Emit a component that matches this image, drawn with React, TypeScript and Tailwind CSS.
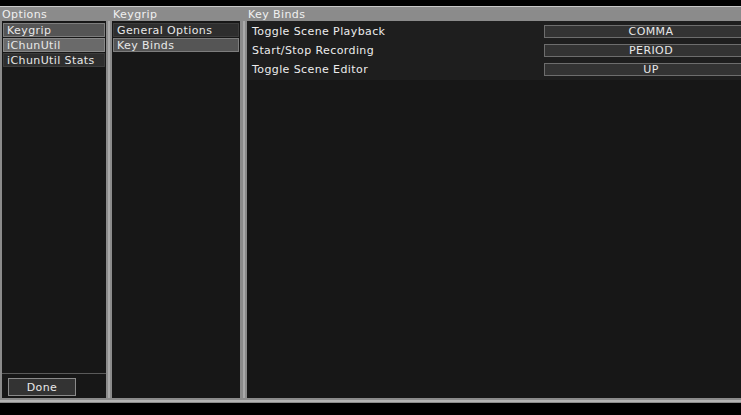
import React from "react";

type Item = { label: string; tone: "selected" | "hover" | "idle" };

const optionItems: Item[] = [
  { label: "Keygrip", tone: "selected" },
  { label: "iChunUtil", tone: "hover" },
  { label: "iChunUtil Stats", tone: "idle" },
];

const keygripItems: Item[] = [
  { label: "General Options", tone: "idle" },
  { label: "Key Binds", tone: "selected" },
];

const binds = [
  { name: "Toggle Scene Playback", key: "COMMA" },
  { name: "Start/Stop Recording", key: "PERIOD" },
  { name: "Toggle Scene Editor", key: "UP" },
];

function ListRow({ item }: { item: Item }) {
  const tone =
    item.tone === "selected"
      ? "bg-[#555555] border-[#7d7d7d]"
      : item.tone === "hover"
      ? "bg-[#6a6a6a] border-[#888888]"
      : "bg-[#2e2e2e] border-[#3d3d3d]";
  return (
    <div
      className={`h-[14px] border flex items-center pl-[3px] text-[#e8e8e8] leading-none ${tone}`}
    >
      {item.label}
    </div>
  );
}

function Separator({ w }: { w: string }) {
  return (
    <div className={`${w} flex justify-center bg-[#8b8b8b]`}>
      <div className="w-[2px] bg-[#a9a9a9]" />
    </div>
  );
}

export default function App() {
  return (
    <div className="w-[741px] h-[415px] bg-black overflow-hidden font-['DejaVu_Sans',sans-serif] text-[11px] tracking-[0.4px]">
      <div className="h-[6px]" />
      <div className="h-[397px] flex flex-col bg-[#8b8b8b] border-t border-[#c8c8c8]">
        {/* header labels */}
        <div className="h-[14px] flex items-center text-[#f0f0f0] leading-none">
          <div className="w-[112px] pl-[2px]">Options</div>
          <div className="w-[135px] pl-[1px]">Keygrip</div>
          <div className="pl-[1px]">Key Binds</div>
        </div>

        <div className="flex-1 flex pl-[2px] min-h-0">
          {/* options column */}
          <div className="w-[104px] flex flex-col bg-[#171717]">
            <div className="flex-1 flex flex-col gap-[1px] px-[1px] pt-[2px]">
              {optionItems.map((it) => (
                <ListRow key={it.label} item={it} />
              ))}
            </div>
            <div className="h-[25px] border-t border-[#5a5a5a] pl-[6px] pt-[4px]">
              <button className="w-[68px] h-[18px] border border-[#8a8a8a] bg-[#333333] text-[#e8e8e8] leading-none flex items-center justify-center">
                Done
              </button>
            </div>
          </div>

          <Separator w="w-[6px]" />

          {/* keygrip column */}
          <div className="w-[128px] bg-[#171717] flex flex-col gap-[1px] px-[1px] pt-[2px]">
            {keygripItems.map((it) => (
              <ListRow key={it.label} item={it} />
            ))}
          </div>

          <Separator w="w-[7px]" />

          {/* key binds column */}
          <div className="flex-1 bg-[#171717] overflow-hidden">
            <div className="h-[59px] bg-[#1e1e1e] flex flex-col pt-[4px] gap-[6px]">
              {binds.map((b) => (
                <div key={b.name} className="h-[13px] flex items-center">
                  <div className="w-[297px] shrink-0 pl-[5px] text-[#ececec] leading-none">
                    {b.name}
                  </div>
                  <div className="w-[214px] shrink-0 h-[13px] border border-[#6d6d6d] bg-[#333333] text-[#e8e8e8] leading-none flex items-center justify-center">
                    {b.key}
                  </div>
                </div>
              ))}
            </div>
          </div>
        </div>

        <div className="h-[5px] flex flex-col justify-center">
          <div className="h-[2px] bg-[#b4b4b4]" />
        </div>
      </div>
    </div>
  );
}
